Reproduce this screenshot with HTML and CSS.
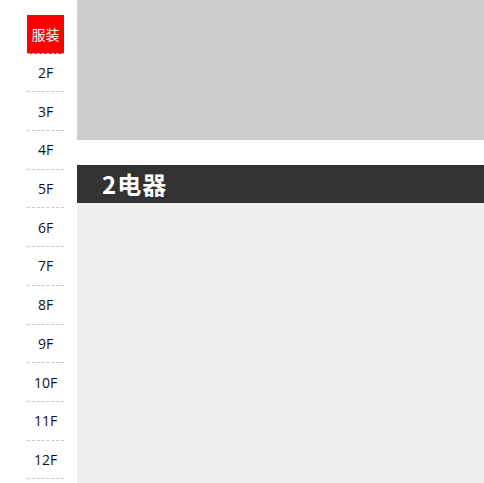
FILE: index.html
```html
<!DOCTYPE html>
<html lang="zh">
<head>
<meta charset="utf-8">
<link rel="stylesheet" href="styles.css">
</head>
<body>
<div class="page">
  <nav class="elevator">
    <a class="floor active">服装</a>
    <a class="floor">2F</a>
    <a class="floor">3F</a>
    <a class="floor">4F</a>
    <a class="floor">5F</a>
    <a class="floor">6F</a>
    <a class="floor">7F</a>
    <a class="floor">8F</a>
    <a class="floor">9F</a>
    <a class="floor">10F</a>
    <a class="floor">11F</a>
    <a class="floor">12F</a>
  </nav>
  <main class="content">
    <div class="block-top"></div>
    <section class="floor-section">
      <h2 class="floor-title">2电器</h2>
      <div class="floor-body"></div>
    </section>
  </main>
</div>
</body>
</html>
```

FILE: styles.css
```css
html, body {
  margin: 0;
  padding: 0;
  background: #fff;
  overflow: hidden;
  height: 483px;
}
body {
  font-family: "Open Sans", "Noto Sans CJK SC", sans-serif;
}
.page {
  display: flex;
  align-items: flex-start;
  height: 483px;
}
.elevator {
  margin-left: 27px;
  margin-top: 15px;
  width: 37px;
  display: flex;
  flex-direction: column;
  flex-shrink: 0;
}
.floor {
  box-sizing: border-box;
  height: 38.7px;
  border-bottom: 1px dashed #c8c8c8;
  display: flex;
  align-items: center;
  justify-content: center;
  font-size: 14px;
  color: #111122;
}
.floor.active {
  background: #ff0000;
  color: #fff;
  font-family: "Noto Sans CJK SC", sans-serif;
  font-size: 14px;
}
.content {
  margin-left: 13px;
  flex: 1;
  display: flex;
  flex-direction: column;
  height: 483px;
}
.block-top {
  height: 140px;
  background: #cccccc;
}
.floor-section {
  margin-top: 25px;
  flex: 1;
  display: flex;
  flex-direction: column;
}
.floor-title {
  margin: 0;
  height: 38px;
  background: #333333;
  color: #fff;
  font-family: "Noto Sans CJK SC", sans-serif;
  font-weight: bold;
  font-size: 24px;
  letter-spacing: 1px;
  line-height: 38px;
  padding-left: 25px;
}
.floor-body {
  flex: 1;
  background: #eeeeee;
}
```
